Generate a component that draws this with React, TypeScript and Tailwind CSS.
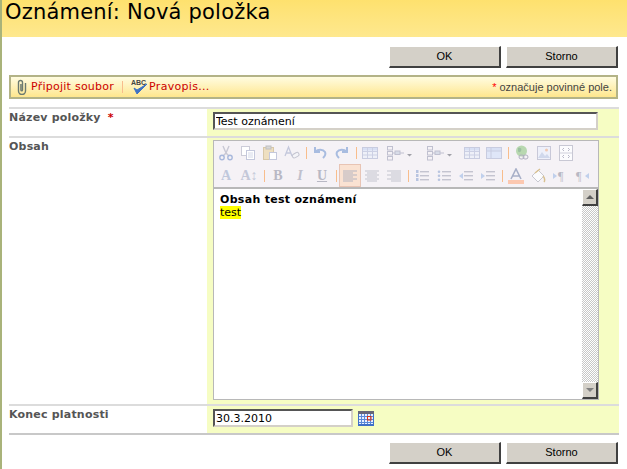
import { FC, ReactNode } from "react";

const verdana = "font-['DejaVu_Sans',sans-serif]";
const tahoma = "font-['Liberation_Sans',sans-serif]";

const Buttons: FC<{ className: string }> = ({ className }) => (
  <div className={`flex justify-end gap-[5px] pr-[9px] ${className}`}>
    {["OK", "Storno"].map((label) => (
      <button
        key={label}
        className={`h-[22px] w-[112px] border-t border-l border-b-2 border-r-2 border-t-white border-l-white border-b-[#404040] border-r-[#404040] bg-[#d4d0c8] text-[11px] text-black ${tahoma}`}
      >
        {label}
      </button>
    ))}
  </div>
);

// 16x16 toolbar glyph, everything is washed out because the editor is disabled
const Ico: FC<{ w?: number; children: ReactNode; active?: boolean }> = ({ w = 22, children, active }) => (
  <div
    style={{ width: w }}
    className={`flex h-[23px] shrink-0 items-center justify-center ${active ? "border border-[#e8c4b4] bg-[#fae2d2]" : ""}`}
  >
    {children}
  </div>
);

const Svg: FC<{ children: ReactNode; w?: number }> = ({ children, w = 16 }) => (
  <svg width={w} height="16" viewBox={`0 0 ${w} 16`} fill="none" className="block">
    {children}
  </svg>
);

const Sep = () => (
  <div className="flex w-[6px] shrink-0 justify-center">
    <div className="h-[12px] w-px bg-[#f8bd8c]" />
  </div>
);

const Lines: FC<{ kind: "left" | "center" | "right" }> = ({ kind }) => {
  const rows = [14, 10, 14, 10, 14, 10];
  return (
    <Svg>
      {rows.map((r, i) => {
        const x = kind === "left" ? 1 : kind === "right" ? 15 - r : 8 - r / 2;
        return <rect key={i} x={x} y={2.5 + i * 2} width={r} height="1" fill={kind === "left" ? "#b4b4c0" : "#c4c4ce"} />;
      })}
    </Svg>
  );
};

const ListIco: FC<{ marker: "num" | "dot" | "out" | "in" }> = ({ marker }) => (
  <Svg>
    {[3, 7, 11].map((y) => (
      <rect key={y} x="6" y={y} width="9" height="1.4" fill="#c4c4d0" />
    ))}
    {marker === "num" && [2, 6, 10].map((y) => <rect key={y} x="2" y={y} width="2.5" height="3" fill="#b8c4e0" />)}
    {marker === "dot" && [3, 7, 11].map((y) => <circle key={y} cx="3" cy={y + 0.7} r="1.3" fill="#b8c4e0" />)}
    {marker === "out" && <path d="M5 5 1 8l4 3z" fill="#c0d0ec" />}
    {marker === "in" && <path d="M1 5l4 3-4 3z" fill="#c0d0ec" />}
  </Svg>
);

const Tree = () => (
  <Svg w={26}>
    <rect x="1.5" y="1.5" width="5" height="3.500" stroke="#c0c0d0" />
    <rect x="1.5" y="6.5" width="5" height="3.500" stroke="#c0c0d0" />
    <rect x="1.5" y="11.5" width="5" height="3.500" stroke="#c0c0d0" />
    <rect x="9" y="6" width="5" height="3.500" fill="#d8dce8" stroke="#c0c0d0" />
    <path d="M6.5 8H9M14 8h4" stroke="#c0c0d0" />
    <path d="M21 9l2.500 2.500L26 9z" fill="#a0a0a8" />
  </Svg>
);

const Grid: FC<{ head?: boolean }> = ({ head }) => (
  <Svg>
    <rect x="0.5" y="2.5" width="15" height="11" fill={head ? "#dfe6f8" : "#eef0f8"} stroke="#c8cce0" />
    <rect x="1" y="3" width="14" height="2.5" fill="#d8e0f4" />
    {!head && <path d="M5.5 3v10M10.5 3v10M1 6.5h14M1 10h14" stroke="#ccd0e4" />}
    {head && <path d="M5 3v10M1 6h14" stroke="#c8cce0" />}
  </Svg>
);

const Glyph: FC<{ children: ReactNode; className: string }> = ({ children, className }) => (
  <span className={`text-[14px] leading-none ${className}`}>{children}</span>
);

const EditorToolbar = () => (
  <div className="border-b-2 border-[#b8b8b8] bg-[#f5f2f6] pl-px">
    <div className="flex h-[23px] items-center">
      <Ico>
        <Svg>
          <path d="M5 1l3 7 3-7M8 8l-3 3M8 8l3 3" stroke="#c8c8d4" strokeWidth="1.4" />
          <circle cx="4" cy="12.5" r="2.2" stroke="#a8b8dc" strokeWidth="1.4" />
          <circle cx="12" cy="12.5" r="2.2" stroke="#a8b8dc" strokeWidth="1.4" />
        </Svg>
      </Ico>
      <Ico>
        <Svg>
          <rect x="1.5" y="1.5" width="8" height="9" fill="#fff" stroke="#ccccd8" />
          <rect x="6.5" y="5.5" width="8" height="9" fill="#fff" stroke="#c4c8dc" />
          <path d="M8 8h5M8 10h5M8 12h5" stroke="#d4d8e8" />
        </Svg>
      </Ico>
      <Ico>
        <Svg>
          <rect x="1.5" y="2.5" width="10" height="12" fill="#eedfc0" stroke="#d8c8a8" />
          <rect x="4" y="1" width="5" height="3" fill="#d8d8d8" stroke="#c0c0c0" />
          <rect x="7.5" y="7.5" width="7" height="7" fill="#fff" stroke="#c4c8dc" />
        </Svg>
      </Ico>
      <Ico>
        <Svg>
          <path d="M1 11 4.500 2 8 11M2.500 8h4" stroke="#c4c8dc" strokeWidth="1.300" />
          <rect x="8" y="8.500" width="7" height="4" rx="2" transform="rotate(-30 11 10)" fill="#f4f4f8" stroke="#c4c4d0" />
        </Svg>
      </Ico>
      <Sep />
      <Ico>
        <Svg>
          <path d="M3 2v5h5M3.500 6.500C6 4 11 4 13 7c1 2 0 4-2 6" stroke="#a8bce0" strokeWidth="2" />
        </Svg>
      </Ico>
      <Ico>
        <Svg>
          <path d="M13 2v5H8M12.500 6.500C10 4 5 4 3 7c-1 2 0 4 2 6" stroke="#a8bce0" strokeWidth="2" />
        </Svg>
      </Ico>
      <Sep />
      <Ico>
        <Grid />
      </Ico>
      <Ico w={36}>
        <Tree />
      </Ico>
      <Ico w={44}>
        <Tree />
      </Ico>
      <Ico>
        <Grid />
      </Ico>
      <Ico>
        <Grid head />
      </Ico>
      <Sep />
      <Ico>
        <Svg>
          <circle cx="7.500" cy="6" r="5.500" fill="#b8d8b0" />
          <path d="M4 3c3-1 4 1 3 3s-3 1-3 0" fill="#9cc0a0" />
          <rect x="5" y="10" width="5" height="4" rx="2" stroke="#b0b0c0" />
          <rect x="9" y="10" width="5" height="4" rx="2" stroke="#b0b0c0" />
        </Svg>
      </Ico>
      <Ico>
        <Svg>
          <rect x="1.5" y="1.5" width="13" height="13" fill="#eef0fa" stroke="#c8c8d8" />
          <circle cx="10.500" cy="5" r="1.500" fill="#f0c8b0" />
          <path d="M2 13l4-6 3 4 2-2 3 4z" fill="#d0d8ec" />
        </Svg>
      </Ico>
      <Ico>
        <Svg>
          <rect x="1.5" y="0.5" width="13" height="15" fill="#fcfcfe" stroke="#c8c8d4" />
          <path d="M2 8h12" stroke="#d0d0dc" />
          <path d="M6 3 4.500 4.500 6 6M10 3l1.500 1.500L10 6M6 10 4.500 11.500 6 13M10 10l1.500 1.500L10 13" stroke="#b8b8c8" />
        </Svg>
      </Ico>
    </div>
    <div className="flex h-[23px] items-center">
      <Ico>
        <Glyph className="font-['Liberation_Serif',serif] font-bold text-[#c0c8dc]">A</Glyph>
      </Ico>
      <Ico w={24}>
        <Glyph className="font-['Liberation_Serif',serif] font-bold text-[#c4c8d8]">A↕</Glyph>
      </Ico>
      <Sep />
      <Ico>
        <Glyph className="font-['Liberation_Serif',serif] font-bold text-[#b8b8c4]">B</Glyph>
      </Ico>
      <Ico>
        <Glyph className="font-['Liberation_Serif',serif] font-bold italic text-[#c0c0cc]">I</Glyph>
      </Ico>
      <Ico>
        <Glyph className="font-['Liberation_Serif',serif] font-bold text-[#b8b8c4] underline">U</Glyph>
      </Ico>
      <Sep />
      <Ico active>
        <Lines kind="left" />
      </Ico>
      <Ico>
        <Lines kind="center" />
      </Ico>
      <Ico>
        <Lines kind="right" />
      </Ico>
      <Sep />
      <Ico>
        <ListIco marker="num" />
      </Ico>
      <Ico>
        <ListIco marker="dot" />
      </Ico>
      <Ico>
        <ListIco marker="out" />
      </Ico>
      <Ico>
        <ListIco marker="in" />
      </Ico>
      <Sep />
      <Ico>
        <Svg>
          <path d="M3 11 8 1l5 10M5 8h6" stroke="#a8b0c8" strokeWidth="1.600" />
          <rect x="0" y="12" width="16" height="4" fill="#fcc8b0" />
        </Svg>
      </Ico>
      <Ico>
        <Svg>
          <path d="M2 8l6-6 6 6-6 6z" fill="#fbfbfd" stroke="#c8c8d0" />
          <path d="M5 5l5-4M13 8c2 2 2 5 1 6" stroke="#d8c090" strokeWidth="1.500" />
        </Svg>
      </Ico>
      <Ico>
        <Svg>
          <path d="M1 5l4 3-4 3z" fill="#c0d0ec" />
          <text x="6" y="12" fontSize="12" fill="#b8b8c4" fontFamily="Liberation Serif">¶</text>
        </Svg>
      </Ico>
      <Ico>
        <Svg>
          <text x="2" y="12" fontSize="12" fill="#b8b8c4" fontFamily="Liberation Serif">¶</text>
          <path d="M15 5l-4 3 4 3z" fill="#c0d0ec" />
        </Svg>
      </Ico>
    </div>
  </div>
);

const ScrollBtn: FC<{ down?: boolean }> = ({ down }) => (
  <div className="flex h-[17px] w-[16px] shrink-0 items-center justify-center border-t border-l border-b-2 border-r-2 border-t-white border-l-white border-b-[#404040] border-r-[#404040] bg-[#d4d0c8]">
    <div
      className={`h-0 w-0 border-x-[4px] border-x-transparent ${down ? "border-t-[4px] border-t-[#808080]" : "border-b-[4px] border-b-[#606060]"}`}
    />
  </div>
);

const Row: FC<{ label: ReactNode; h: string; children: ReactNode }> = ({ label, h, children }) => (
  <div className={`flex border-b-2 border-[#dcdcdc] last:border-[#c8c8c8] ${h}`}>
    <div className={`w-[198px] shrink-0 text-[11px] leading-[17px] font-bold tracking-[0.2px] text-[#555] ${verdana}`}>
      {label}
    </div>
    <div className="min-w-0 flex-1 bg-[#f6fdc3] pt-[3px] pl-[6px]">{children}</div>
  </div>
);

const insetInput =
  "border-2 border-t-[#555] border-l-[#555] border-r-[#d4d0c8] border-b-[#d4d0c8] bg-white px-px text-black outline-none";

export default function App() {
  return (
    <div className="h-[469px] w-[627px] overflow-hidden border-l-2 border-[#a9b37a] bg-white">
      <div className={`h-[37px] bg-gradient-to-b from-[#fee16e] to-[#fee88e] pl-[3px] text-[21px] leading-[24px] tracking-[0.2px] text-black ${verdana}`}>
        Oznámení: Nová položka
      </div>

      <Buttons className="pt-[9px]" />

      <div className={`mt-[7px] mr-[9px] ml-[7px] flex h-[24px] items-center border-2 border-[#b3b387] bg-gradient-to-b from-[#fffce0] to-[#fee68c] text-[11px] ${verdana}`}>
        <svg width="12" height="16" viewBox="0 0 12 16" fill="none" className="ml-[5px] shrink-0">
          <path d="M9.500 4v8a3.500 3.500 0 0 1-7 0V3.500a2 2 0 0 1 4 0V11a.8.8 0 0 1-1.600 0V5" stroke="#6b7a70" strokeWidth="1.400" />
        </svg>
        <span className="ml-[3px] tracking-[0.25px] text-[#cc0000]">Připojit soubor</span>
        <div className="mr-[8px] ml-[8px] h-[12px] w-px bg-[#f8bd8c]" />
        <svg width="17" height="16" viewBox="0 0 17 16" fill="none" className="shrink-0">
          <text x="0" y="6" fontSize="7" fontWeight="700" fill="#444" fontFamily="Liberation Sans">ABC</text>
          <path d="M3 9l3 6 10-10-10 6z" fill="#3f73c4" stroke="#3f73c4" />
        </svg>
        <span className="ml-px tracking-[0.3px] text-[#cc0000]">Pravopis...</span>
        <span className={`mr-[4px] ml-auto text-[#444] ${tahoma}`}>
          <span className="text-[#ff0000]">*</span> označuje povinné pole.
        </span>
      </div>

      <div className="mt-[8px] mr-[8px] ml-[7px] border-t-2 border-[#dcdcdc]">
        <Row h="h-[29px]" label={<>Název položky <span className="ml-[3px] text-[#cc0000]">*</span></>}>
          <input
            readOnly
            defaultValue="Test oznámení"
            className={`block h-[18px] w-[385px] text-[11px] ${insetInput} ${verdana}`}
          />
        </Row>
        <Row h="h-[268px]" label="Obsah">
          <div className="-mt-px w-[386px] border border-[#b8b8b8]">
            <EditorToolbar />
            <div className="flex h-[210px] bg-white">
              <div className={`flex-1 pt-[4px] pl-[6px] text-[11px] leading-[13px] text-black ${verdana}`}>
                <div className="font-bold tracking-[0.3px]">Obsah test oznámení</div>
                <span className="bg-[#ffff00]">test</span>
              </div>
              <div className="flex w-[16px] flex-col">
                <ScrollBtn />
                <div className="flex-1 bg-[repeating-conic-gradient(#c8c8c8_0_25%,#ffffff_0_50%)] bg-[length:2px_2px]" />
                <ScrollBtn down />
              </div>
            </div>
          </div>
        </Row>
        <Row h="h-[29px]" label="Konec platnosti">
          <div className="flex items-center">
            <input
              readOnly
              defaultValue="30.3.2010"
              className={`block h-[18px] w-[140px] text-[11px] ${insetInput} ${verdana}`}
            />
            <svg width="16" height="16" viewBox="0 0 16 16" className="ml-[5px] shrink-0">
              <rect x="0" y="1" width="16" height="15" fill="#3f6fc8" />
              <rect x="0" y="1" width="16" height="3" fill="#667" />
              <rect x="1" y="4" width="14" height="10" fill="#e8f0ff" />
              <path d="M3.500 4v10M6.500 4v10M9.500 4v10M12.500 4v10M1 6.500h14M1 9.500h14M1 12.500h14" stroke="#5b8ad8" />
              <rect x="9.500" y="6.500" width="3.500" height="3.500" fill="none" stroke="#e03010" />
            </svg>
          </div>
        </Row>
      </div>

      <Buttons className="pt-[7px]" />
    </div>
  );
}
